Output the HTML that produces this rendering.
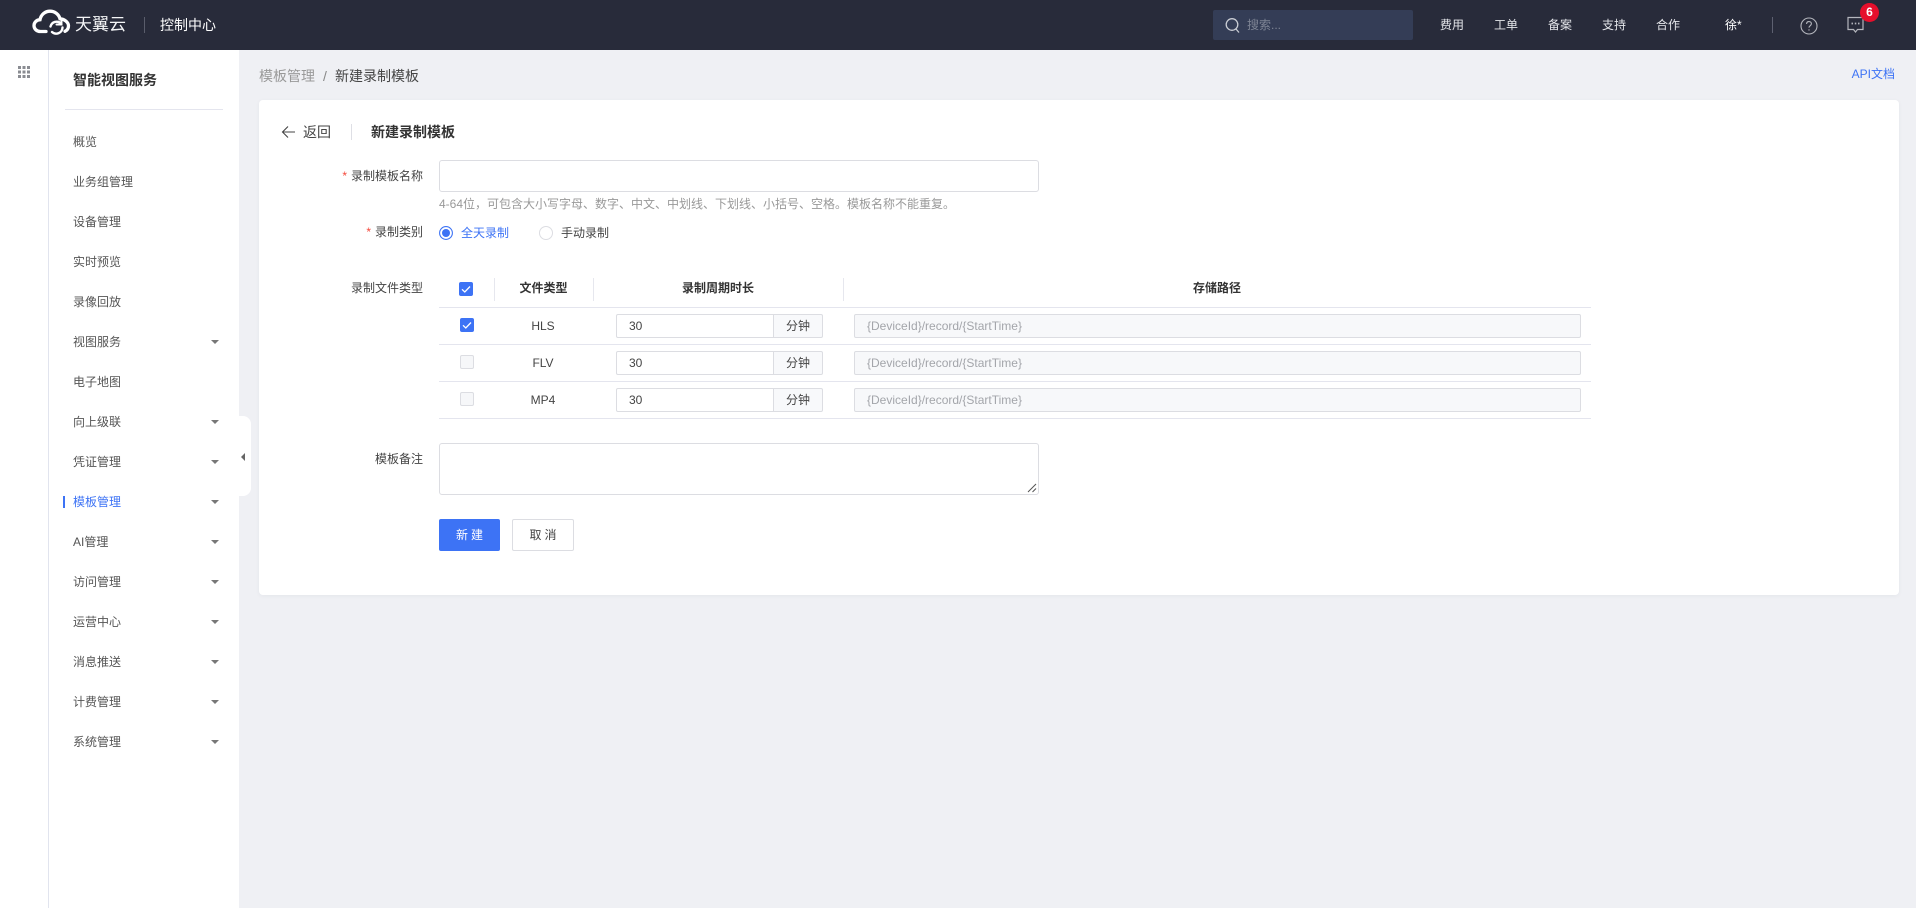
<!DOCTYPE html>
<html lang="zh-CN">
<head>
<meta charset="utf-8">
<title>新建录制模板</title>
<style>
*{box-sizing:border-box}
html,body{margin:0;padding:0;width:1916px;height:908px;overflow:hidden;background:#eff0f4;font-family:"Liberation Sans","Noto Sans CJK SC",sans-serif;font-size:12px;color:#333}
.a{position:absolute;white-space:nowrap}
.t{position:absolute;white-space:nowrap;line-height:20px;height:20px}
#hd{position:absolute;left:0;top:0;width:1916px;height:50px;background:#282b3a}
#rail{position:absolute;left:0;top:50px;width:49px;height:858px;background:#fff;border-right:1px solid #e1e4ee}
#nav{position:absolute;left:49px;top:50px;width:190px;height:858px;background:#fff}
#handle{position:absolute;left:239px;top:416px;width:12px;height:80px;background:#fff;border-radius:0 8px 8px 0}
#card{position:absolute;left:259px;top:100px;width:1640px;height:495px;background:#fff;border-radius:4px;box-shadow:0 1px 4px rgba(40,50,80,.05)}
.hn{color:#e4e6ea;top:15px}
.m{left:73px;color:#555}
.car{position:absolute;left:211px;width:0;height:0;border-left:4px solid transparent;border-right:4px solid transparent;border-top:4px solid #777}
.lbl{text-align:right;right:1493px;color:#444}
.req{color:#f5483b;margin-right:4px}
.line{position:absolute;left:439px;width:1152px;height:1px;background:#e4e5ee}
.vd{position:absolute;top:278px;width:1px;height:23px;background:#e6e7ee}
.th{font-weight:700;color:#333;text-align:center;top:278px}
.td{text-align:center;color:#444;width:100px;left:494px}
.cb{position:absolute;left:460px;width:14px;height:14px;border-radius:2px;background:#3d73f5}
.cb svg{position:absolute;left:0;top:0}
.cb.off{background:#f6f7f9;border:1px solid #dcdde2}
.num{position:absolute;left:616px;width:158px;height:24px;border:1px solid #dcdde2;border-radius:2px 0 0 2px;background:#fff;line-height:22px;padding-left:12px;color:#444}
.add{position:absolute;left:773px;width:50px;height:24px;border:1px solid #dcdde2;border-radius:0 2px 2px 0;background:#f8f9fb;line-height:22px;text-align:center;color:#444}
.path{position:absolute;left:854px;width:727px;height:24px;border:1px solid #dcdde2;border-radius:2px;background:#f7f8fa;line-height:22px;padding-left:12px;color:#a3a5aa}
</style>
</head>
<body>
<div id="hd"></div>
<svg class="a" style="left:32px;top:9px" width="40" height="26" viewBox="0 0 40 26" fill="none" stroke="#fff" stroke-linecap="round">
<path d="M14 22.5H8.5C4.6 22.5 2 19.8 2 16.6 2 13.4 4.5 10.9 8 10.7 9 5.6 13.200 2.200 18 2.200c4.800 0 8.800 3 10 7.600 4.600.2 8.500 3.700 8.500 7 0 2.700-1.300 4.600-3.500 5.500" stroke-width="3.300"/>
<path d="M18.500 17.500a6.300 6.300 0 0 1 10.500-3M30.500 18.500a6.300 6.300 0 0 1-10.500 4.500" stroke-width="2.400"/>
<path d="M29.500 10.500v5h-5" stroke-width="2"/>
</svg>
<div class="t" style="left:75px;top:14px;font-size:17px;color:#f4f5f7;line-height:22px;height:22px;letter-spacing:0">天翼云</div>
<div class="a" style="left:144px;top:17px;width:1px;height:16px;background:#5a5d6b"></div>
<div class="t" style="left:160px;top:15px;font-size:14px;color:#fff">控制中心</div>

<div class="a" style="left:1213px;top:10px;width:200px;height:30px;background:#343d56;border-radius:2px"></div>
<svg class="a" style="left:1225px;top:17px" width="16" height="17" viewBox="0 0 16 17" fill="none" stroke="#c9ccd3" stroke-width="1.300"><circle cx="7" cy="7.500" r="5.800"/><path d="M11 12l3 3.500"/></svg>
<div class="t" style="left:1247px;top:15px;color:#7e8494">搜索...</div>
<div class="t hn" style="left:1440px">费用</div>
<div class="t hn" style="left:1494px">工单</div>
<div class="t hn" style="left:1548px">备案</div>
<div class="t hn" style="left:1602px">支持</div>
<div class="t hn" style="left:1656px">合作</div>
<div class="t hn" style="left:1725px;color:#fff">徐*</div>
<div class="a" style="left:1772px;top:17px;width:1px;height:16px;background:#5d6070"></div>
<svg class="a" style="left:1800px;top:17px" width="18" height="18" viewBox="0 0 18 18" fill="none" stroke="#b4b6bd" stroke-width="1.100"><circle cx="9" cy="9" r="8"/><path d="M6.600 7c0-1.500 1-2.400 2.400-2.400s2.400.9 2.400 2.200c0 1.800-2.400 1.900-2.400 3.800"/><path d="M9 12.300v1.300"/></svg>
<svg class="a" style="left:1846px;top:16px" width="19" height="18" viewBox="0 0 19 18" fill="none" stroke="#b4b6bd" stroke-width="1.200"><path d="M2 1.500h15v12h-5.500l-2 2.500-2-2.500H2z"/><path d="M5.500 7.500h1.500M8.800 7.500h1.500M12 7.500h1.500" stroke-width="1.800"/></svg>
<div class="a" style="left:1860px;top:3px;width:19px;height:19px;border-radius:50%;background:#e60f2c;color:#fff;text-align:center;line-height:18px;font-size:12px;font-weight:700">6</div>

<div id="rail"></div>
<svg class="a" style="left:18px;top:66px" width="12" height="12" fill="#8a8c92"><rect x="0" y="0" width="3" height="3"/><rect x="4.500" y="0" width="3" height="3"/><rect x="9" y="0" width="3" height="3"/><rect x="0" y="4.500" width="3" height="3"/><rect x="4.500" y="4.500" width="3" height="3"/><rect x="9" y="4.500" width="3" height="3"/><rect x="0" y="9" width="3" height="3"/><rect x="4.500" y="9" width="3" height="3"/><rect x="9" y="9" width="3" height="3"/></svg>
<div id="nav"></div>
<div class="t" style="left:73px;top:70px;font-size:14px;font-weight:700;color:#333">智能视图服务</div>
<div class="a" style="left:65px;top:109px;width:158px;height:1px;background:#e4e5ee"></div>

<div class="t m" style="top:132px">概览</div>
<div class="t m" style="top:172px">业务组管理</div>
<div class="t m" style="top:212px">设备管理</div>
<div class="t m" style="top:252px">实时预览</div>
<div class="t m" style="top:292px">录像回放</div>
<div class="t m" style="top:332px">视图服务</div><div class="car" style="top:340px"></div>
<div class="t m" style="top:372px">电子地图</div>
<div class="t m" style="top:412px">向上级联</div><div class="car" style="top:420px"></div>
<div class="t m" style="top:452px">凭证管理</div><div class="car" style="top:460px"></div>
<div class="a" style="left:63px;top:496px;width:2px;height:12px;background:#3d73f5"></div>
<div class="t m" style="top:492px;color:#3d73f5">模板管理</div><div class="car" style="top:500px"></div>
<div class="t m" style="top:532px">AI管理</div><div class="car" style="top:540px"></div>
<div class="t m" style="top:572px">访问管理</div><div class="car" style="top:580px"></div>
<div class="t m" style="top:612px">运营中心</div><div class="car" style="top:620px"></div>
<div class="t m" style="top:652px">消息推送</div><div class="car" style="top:660px"></div>
<div class="t m" style="top:692px">计费管理</div><div class="car" style="top:700px"></div>
<div class="t m" style="top:732px">系统管理</div><div class="car" style="top:740px"></div>

<div id="handle"></div>
<div class="a" style="left:241px;top:453px;width:0;height:0;border-top:4px solid transparent;border-bottom:4px solid transparent;border-right:4px solid #666"></div>

<div class="t" style="left:259px;top:66px;font-size:14px;color:#999">模板管理</div>
<div class="t" style="left:323px;top:66px;font-size:14px;color:#888">/</div>
<div class="t" style="left:335px;top:66px;font-size:14px;color:#444">新建录制模板</div>
<div class="t" style="right:21px;top:64px;color:#3d73f5">API文档</div>

<div id="card"></div>
<svg class="a" style="left:281px;top:125px" width="15" height="14" viewBox="0 0 15 14" fill="none" stroke="#444" stroke-width="1.100"><path d="M14 7H1.500M7 1.500L1.500 7 7 12.500"/></svg>
<div class="t" style="left:303px;top:122px;font-size:14px;color:#444">返回</div>
<div class="a" style="left:351px;top:124px;width:1px;height:16px;background:#dedfe5"></div>
<div class="t" style="left:371px;top:122px;font-weight:700;color:#333;font-size:14px">新建录制模板</div>

<div class="t lbl" style="top:166px"><span class="req">*</span>录制模板名称</div>
<div class="a" style="left:439px;top:160px;width:600px;height:32px;border:1px solid #dcdde2;border-radius:3px;background:#fff"></div>
<div class="t" style="left:439px;top:194px;color:#999">4-64位，可包含大小写字母、数字、中文、中划线、下划线、小括号、空格。模板名称不能重复。</div>

<div class="t lbl" style="top:222px"><span class="req">*</span>录制类别</div>
<svg class="a" style="left:439px;top:226px" width="14" height="14"><circle cx="7" cy="7" r="6.400" fill="#fff" stroke="#3d73f5" stroke-width="1.100"/><circle cx="7" cy="7" r="4" fill="#3d73f5"/></svg>
<div class="t" style="left:461px;top:223px;color:#3d73f5">全天录制</div>
<svg class="a" style="left:539px;top:226px" width="14" height="14"><circle cx="7" cy="7" r="6.500" fill="#fff" stroke="#dcdde2"/></svg>
<div class="t" style="left:561px;top:223px;color:#444">手动录制</div>

<div class="t lbl" style="top:278px">录制文件类型</div>
<div class="cb" style="left:459px;top:282px"><svg width="14" height="14" fill="none" stroke="#fff" stroke-width="1.300"><path d="M3 7.300l2.800 2.700L11 4.500"/></svg></div>
<div class="vd" style="left:494px"></div>
<div class="vd" style="left:593px"></div>
<div class="vd" style="left:843px"></div>
<div class="t th" style="left:494px;width:99px">文件类型</div>
<div class="t th" style="left:593px;width:250px">录制周期时长</div>
<div class="t th" style="left:843px;width:748px">存储路径</div>
<div class="line" style="top:307px"></div>

<div class="cb" style="top:318px"><svg width="14" height="14" fill="none" stroke="#fff" stroke-width="1.300"><path d="M3 7.300l2.800 2.700L11 4.500"/></svg></div>
<div class="t td" style="top:316px;left:493px">HLS</div>
<div class="num" style="top:314px">30</div><div class="add" style="top:314px">分钟</div>
<div class="path" style="top:314px">{DeviceId}/record/{StartTime}</div>
<div class="line" style="top:344px"></div>

<div class="cb off" style="top:355px"></div>
<div class="t td" style="top:353px;left:493px">FLV</div>
<div class="num" style="top:351px">30</div><div class="add" style="top:351px">分钟</div>
<div class="path" style="top:351px">{DeviceId}/record/{StartTime}</div>
<div class="line" style="top:381px"></div>

<div class="cb off" style="top:392px"></div>
<div class="t td" style="top:390px;left:493px">MP4</div>
<div class="num" style="top:388px">30</div><div class="add" style="top:388px">分钟</div>
<div class="path" style="top:388px">{DeviceId}/record/{StartTime}</div>
<div class="line" style="top:418px"></div>

<div class="t lbl" style="top:449px">模板备注</div>
<div class="a" style="left:439px;top:443px;width:600px;height:52px;border:1px solid #dcdde2;border-radius:3px;background:#fff"></div>
<svg class="a" style="left:1027px;top:483px" width="10" height="10" fill="none" stroke="#555" stroke-width="1"><path d="M1 9L9 1M5.500 9L9 5.500"/></svg>

<div class="a" style="left:439px;top:519px;width:61px;height:32px;border-radius:2px;background:#3d73f5;color:#fff;text-align:center;line-height:32px;letter-spacing:3px;padding-left:3px">新建</div>
<div class="a" style="left:512px;top:519px;width:62px;height:32px;border-radius:2px;background:#fff;border:1px solid #dcdde2;color:#444;text-align:center;line-height:30px;letter-spacing:3px;padding-left:3px">取消</div>
</body>
</html>
